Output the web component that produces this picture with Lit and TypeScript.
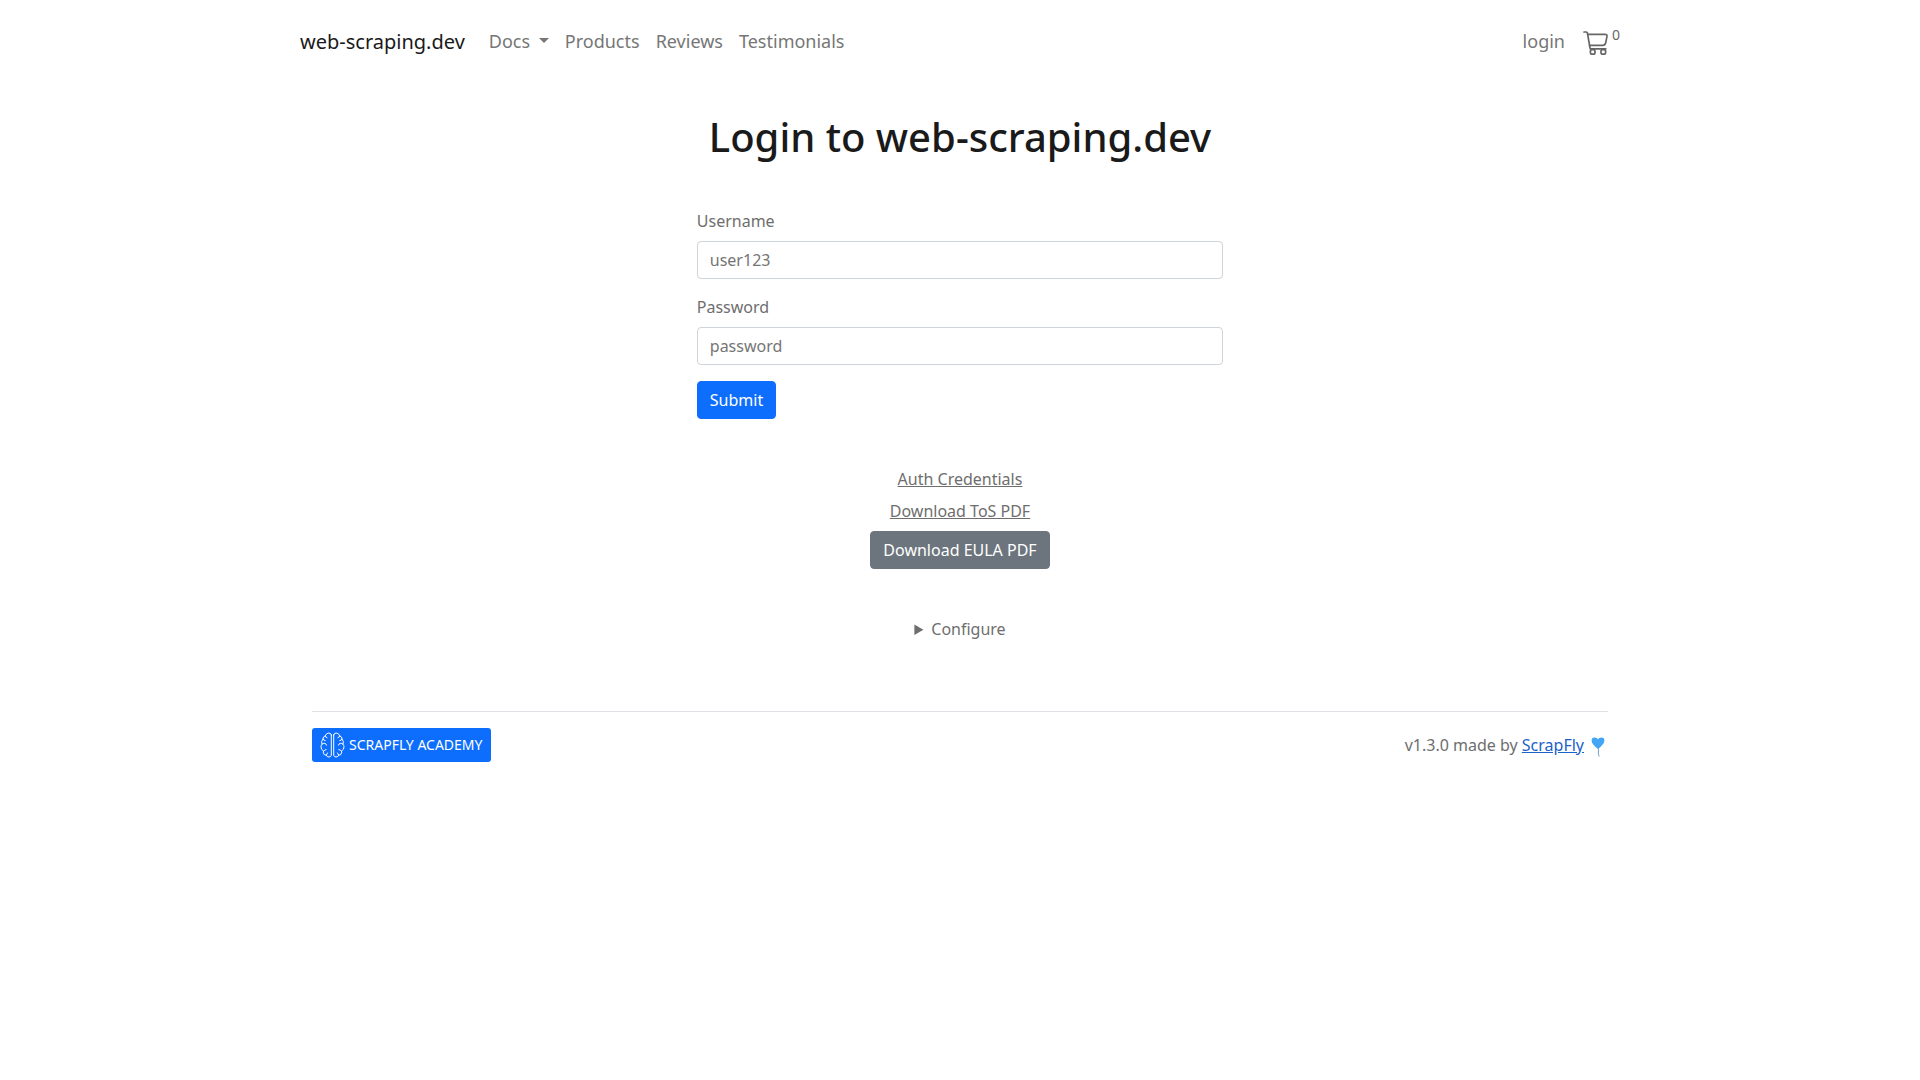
import { LitElement, html, css } from "lit";
import { customElement } from "lit/decorators.js";

@customElement("app-root")
export class AppRoot extends LitElement {
  static styles = css`
    :host {
      display: block;
      color: #6e6e6e;
      background: #fff;
      font-family: "Noto Sans", "Liberation Sans", sans-serif;
      font-size: 16px;
      line-height: 24px;
    }
    * {
      box-sizing: border-box;
    }
    .container {
      width: 100%;
      max-width: 1320px;
      margin: 0 auto;
    }
    .navbar {
      display: flex;
      align-items: center;
      padding: 20px 0;
      font-size: 18px;
      line-height: 27px;
    }
    .brand {
      margin-right: 16px;
      color: #1a1a1a;
      font-size: 20px;
      line-height: 30px;
      text-decoration: none;
    }
    .links {
      display: flex;
      align-items: center;
      flex: 1;
      margin: 0;
      padding: 0;
      list-style: none;
    }
    .link {
      display: block;
      padding: 8px;
      border: 0;
      background: none;
      color: #767676;
      font: inherit;
      text-decoration: none;
      cursor: pointer;
    }
    .caret {
      display: inline-block;
      margin-left: 4px;
      vertical-align: 5px;
      border-top: 5px solid;
      border-right: 5px solid transparent;
      border-left: 5px solid transparent;
    }
    .cart {
      display: flex;
      align-items: flex-start;
      gap: 3px;
      margin-left: 10px;
      color: #666;
      text-decoration: none;
    }
    .cart svg {
      width: 26px;
      height: 26px;
      margin-top: 2px;
    }
    .count {
      font-size: 14px;
      line-height: 14px;
    }
    main {
      display: flex;
      flex-direction: column;
      align-items: center;
      gap: 48px;
      padding: 30px 12px 70px;
    }
    .login {
      display: flex;
      flex-direction: column;
      gap: 48px;
    }
    h1 {
      margin: 0;
      padding: 0 12px;
      color: #1a1a1a;
      font-size: 40px;
      line-height: 48px;
      font-weight: 500;
      text-align: center;
    }
    form {
      display: flex;
      flex-direction: column;
      align-items: flex-start;
      gap: 16px;
    }
    .field {
      display: flex;
      flex-direction: column;
      align-self: stretch;
      gap: 8px;
    }
    .field input {
      width: 100%;
      height: 38px;
      padding: 6px 12px;
      border: 1px solid #ced4da;
      border-radius: 4px;
      background: #fff;
      color: #212529;
      font: inherit;
    }
    .field input::placeholder {
      color: #757575;
      opacity: 1;
    }
    .btn {
      display: block;
      padding: 6px 12px;
      border: 1px solid #0d6efd;
      border-radius: 4px;
      background: #0d6efd;
      color: #fff;
      font: inherit;
      line-height: 24px;
      text-decoration: none;
      cursor: pointer;
    }
    .secondary {
      border-color: #6c757d;
      background: #6c757d;
    }
    .downloads {
      display: flex;
      flex-direction: column;
      align-items: center;
      gap: 8px;
    }
    .plain {
      color: inherit;
    }
    summary {
      cursor: pointer;
    }
    footer {
      padding: 0 12px;
    }
    .foot {
      display: flex;
      align-items: center;
      justify-content: space-between;
      padding-top: 16px;
      border-top: 1px solid #dee2e6;
    }
    .academy {
      display: flex;
      align-items: center;
      gap: 4px;
      padding: 4px 8px;
      border-radius: 3px;
      background: #0d6efd;
      color: #fff;
      font-size: 14px;
      line-height: 24px;
      text-decoration: none;
    }
    .academy svg {
      width: 25px;
      height: 26px;
    }
    .credit {
      display: flex;
      align-items: center;
      gap: 4px;
    }
    .credit a {
      color: #1b62c9;
    }
    .credit svg {
      width: 20px;
      height: 24px;
    }
  `;

  render() {
    return html`
      <header class="container">
        <nav class="navbar" aria-label="Main">
          <a class="brand" href="#">web-scraping.dev</a>
          <ul class="links">
            <li>
              <button class="link" type="button" aria-haspopup="true">
                Docs <span class="caret"></span>
              </button>
            </li>
            <li><a class="link" href="#products">Products</a></li>
            <li><a class="link" href="#reviews">Reviews</a></li>
            <li><a class="link" href="#testimonials">Testimonials</a></li>
          </ul>
          <a class="link" href="#login">login</a>
          <a class="cart" href="#cart" aria-label="Cart">
            <svg viewBox="0 0 26 26" fill="none" stroke="currentColor" stroke-width="1.7" stroke-linecap="round" stroke-linejoin="round" aria-hidden="true">
              <path d="M1 2h2.2q1 0 1.2 1l2.8 15.8h15.6" />
              <path d="M4.8 4.4H22q2.3 0 2 2l-1.3 6.200q-.5 2.800-3.200 2.800H6.600" />
              <rect x="7.4" y="19.6" width="4.6" height="4.6" rx="1.7" />
              <rect x="18" y="19.6" width="4.6" height="4.6" rx="1.7" />
            </svg>
            <span class="count">0</span>
          </a>
        </nav>
      </header>
      <main class="container">
        <section class="login">
          <h1>Login to web-scraping.dev</h1>
          <form @submit=${(e: Event) => e.preventDefault()}>
            <div class="field">
              <label for="username">Username</label>
              <input id="username" name="username" type="text" placeholder="user123" />
            </div>
            <div class="field">
              <label for="password">Password</label>
              <input id="password" name="password" type="password" placeholder="password" />
            </div>
            <button class="btn" type="submit">Submit</button>
          </form>
        </section>
        <div class="downloads">
          <a class="plain" href="#credentials">Auth Credentials</a>
          <a class="plain" href="#tos">Download ToS PDF</a>
          <button class="btn secondary" type="button">Download EULA PDF</button>
        </div>
        <details>
          <summary>Configure</summary>
        </details>
      </main>
      <footer class="container">
        <div class="foot">
          <a class="academy" href="#academy">
            <svg viewBox="0 0 25 26" fill="none" stroke="currentColor" stroke-width="1" stroke-linecap="round" stroke-linejoin="round" aria-hidden="true">
              <g>
                <path d="M11.3 3v20.2q-.4 1.8-2.4 1.8-2 0-2.5-1.8-2.5.2-3-2.3-.2-1 .2-1.8Q.8 17.6 1 14.7q.1-1.5 1-2.4-1.2-3 1-5.2-.1-2.5 2.3-3.3Q6.3 1 8.9 1q2 0 2.4 2z" />
                <path d="M5.3 3.8q.1 1.7 1.7 2M3 7.1q.5 1.5 2.2 1.5M2 12.3q1.2-1.4 2.8-.9 1.5.3 1.7 1.7M3.6 19.1q.7-1.6 2.5-1.5M6.4 23.2q-.2-1.6 1.3-2.3" />
              </g>
              <g transform="matrix(-1 0 0 1 25 0)">
                <path d="M11.3 3v20.2q-.4 1.8-2.4 1.8-2 0-2.5-1.8-2.5.2-3-2.3-.2-1 .2-1.8Q.8 17.6 1 14.7q.1-1.5 1-2.4-1.2-3 1-5.2-.1-2.5 2.3-3.3Q6.3 1 8.9 1q2 0 2.4 2z" />
                <path d="M5.3 3.8q.1 1.7 1.7 2M3 7.1q.5 1.5 2.2 1.5M2 12.3q1.2-1.4 2.8-.9 1.5.3 1.7 1.7M3.6 19.1q.7-1.6 2.5-1.5M6.4 23.2q-.2-1.6 1.3-2.3" />
              </g>
            </svg>
            <span>SCRAPFLY ACADEMY</span>
          </a>
          <span class="credit">
            <span>v1.3.0 made by <a href="#scrapfly">ScrapFly</a></span>
            <svg viewBox="0 -4 20 24" aria-hidden="true">
              <path d="M10 10.5q.8 2.5.4 4.5t.8 4.5" fill="none" stroke="#6fa3c4" stroke-width="1" />
              <path d="M10 12Q3.6 7.3 3.6 3.6 3.6.4 6.6.4 9 .4 10 2.2 11 .4 13.4.4q3 0 3 3.2Q16.400 7.300 10 12z" fill="#42a5f5" />
            </svg>
          </span>
        </div>
      </footer>
    `;
  }
}
